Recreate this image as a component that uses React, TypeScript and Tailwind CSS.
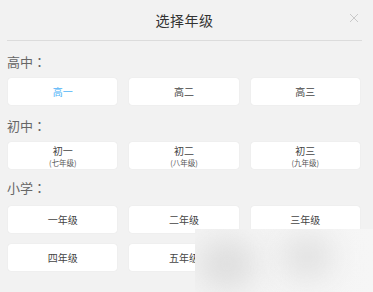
const GROUPS: { label: string; pt: string; pb: string; items: { name: string; sub?: string }[] }[] = [
  { label: '高中', pt: 'pt-[12px]', pb: 'pb-[7px]', items: [{ name: '高一' }, { name: '高二' }, { name: '高三' }] },
  {
    label: '初中',
    pt: 'pt-[12px]',
    pb: 'pb-[7px]',
    items: [
      { name: '初一', sub: '(七年级)' },
      { name: '初二', sub: '(八年级)' },
      { name: '初三', sub: '(九年级)' },
    ],
  },
  {
    label: '小学',
    pt: 'pt-[10px]',
    pb: 'pb-[9px]',
    items: [
      { name: '一年级' },
      { name: '二年级' },
      { name: '三年级' },
      { name: '四年级' },
      { name: '五年级' },
      { name: '六年级' },
    ],
  },
];

export default function App() {
  const selected = '高一';

  return (
    <div
      className="relative w-[373px] h-[292px] overflow-hidden bg-[#f2f2f2]"
      style={{ fontFamily: '"Noto Sans CJK SC", "Noto Sans", sans-serif' }}
    >
      {/* Header */}
      <div className="h-[41px] ml-[7px] mr-[11px] border-b border-[#dcdcdc] grid grid-cols-[20px_1fr_20px] items-center">
        <span />
        <h1 className="text-center text-[14px] leading-[20px] text-[#333] -mt-[1px] tracking-[0.5px]">选择年级</h1>
        <button className="flex justify-end pr-[3px] -mt-[4px]" aria-label="Close">
          <svg viewBox="0 0 10 10" className="w-[10px] h-[10px]">
            <path d="M1 1 L9 9 M9 1 L1 9" stroke="#c9c9c9" strokeWidth="1" fill="none" />
          </svg>
        </button>
      </div>

      {GROUPS.map(g => (
        <div key={g.label}>
          <div className={`pl-[7px] ${g.pt} ${g.pb} text-[13px] leading-[18px] text-[#666]`}>
            {g.label}
            <span style={{ fontFamily: '"Noto Sans CJK JP", sans-serif' }}>：</span>
          </div>
          <div className="grid grid-cols-3 gap-x-[12px] gap-y-[11px] pl-[8px] pr-[13px]">
            {g.items.map(it => (
              <button
                key={it.name}
                className="h-[27px] bg-white rounded-[3px] shadow-[0_0_1px_rgba(0,0,0,0.12)] flex flex-col items-center justify-center"
              >
                <span
                  className={`text-[10px] leading-[14px] ${
                    it.name === selected ? 'text-[#4db3f7]' : 'text-[#444]'
                  }`}
                >
                  {it.name}
                </span>
                {it.sub && <span className="text-[7.5px] leading-[10px] text-[#555]">{it.sub}</span>}
              </button>
            ))}
          </div>
        </div>
      ))}

      {/* blurred watermark overlay */}
      <div className="absolute left-[195px] top-[229px] w-[178px] h-[63px] bg-gradient-to-r from-[#f3f3f3] to-[#f6f6f6] overflow-hidden">
        <div className="absolute left-[4px] top-[10px] w-[56px] h-[50px] rounded-full bg-[#dedede] blur-[14px]" />
        <div className="absolute left-[86px] top-[6px] w-[52px] h-[44px] rounded-full bg-[#e2e2e2] blur-[14px]" />
      </div>
    </div>
  );
}
